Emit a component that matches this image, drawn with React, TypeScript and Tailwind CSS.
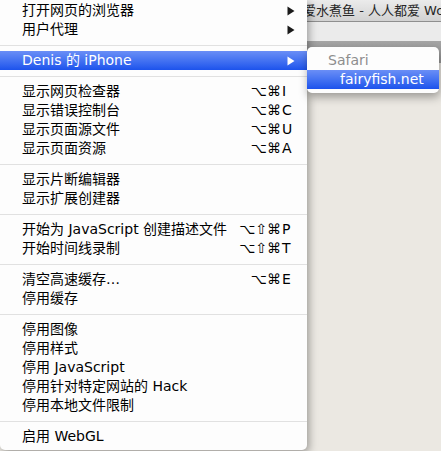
import React from 'react';

type Item =
  | { kind: 'sep' }
  | { kind: 'item'; label: string; mods?: string; keyChar?: string; submenu?: boolean; active?: boolean };

const items: Item[] = [
  { kind: 'item', label: '打开网页的浏览器', submenu: true },
  { kind: 'item', label: '用户代理', submenu: true },
  { kind: 'sep' },
  { kind: 'item', label: 'Denis 的 iPhone', submenu: true, active: true },
  { kind: 'sep' },
  { kind: 'item', label: '显示网页检查器', mods: '⌥⌘', keyChar: 'I' },
  { kind: 'item', label: '显示错误控制台', mods: '⌥⌘', keyChar: 'C' },
  { kind: 'item', label: '显示页面源文件', mods: '⌥⌘', keyChar: 'U' },
  { kind: 'item', label: '显示页面资源', mods: '⌥⌘', keyChar: 'A' },
  { kind: 'sep' },
  { kind: 'item', label: '显示片断编辑器' },
  { kind: 'item', label: '显示扩展创建器' },
  { kind: 'sep' },
  { kind: 'item', label: '开始为 JavaScript 创建描述文件', mods: '⌥⇧⌘', keyChar: 'P' },
  { kind: 'item', label: '开始时间线录制', mods: '⌥⇧⌘', keyChar: 'T' },
  { kind: 'sep' },
  { kind: 'item', label: '清空高速缓存…', mods: '⌥⌘', keyChar: 'E' },
  { kind: 'item', label: '停用缓存' },
  { kind: 'sep' },
  { kind: 'item', label: '停用图像' },
  { kind: 'item', label: '停用样式' },
  { kind: 'item', label: '停用 JavaScript' },
  { kind: 'item', label: '停用针对特定网站的 Hack' },
  { kind: 'item', label: '停用本地文件限制' },
  { kind: 'sep' },
  { kind: 'item', label: '启用 WebGL' },
];

const Arrow = ({ white }: { white?: boolean }) => (
  <svg width="8" height="10" viewBox="0 0 8 10" className="mr-px">
    <path d="M0.5 0.5 L7.5 5 L0.5 9.5 Z" fill={white ? '#ffffff' : '#1a1a1a'} />
  </svg>
);

const MenuRow = ({ item }: { item: Extract<Item, { kind: 'item' }> }) => (
  <div
    className={`flex h-[19px] items-center pl-[22px] pr-[11px] ${
      item.active ? 'bg-gradient-to-b from-[#6a8ef6] to-[#1c52ec] text-white' : 'text-black'
    }`}
  >
    <span className="flex-1 whitespace-nowrap">{item.label}</span>
    {item.keyChar && (
      <>
        <span className="whitespace-nowrap pr-px font-[family-name:'DejaVu_Sans',sans-serif] text-[14px]">{item.mods}</span>
        <span className="w-[14px] text-left">{item.keyChar}</span>
      </>
    )}
    {item.submenu && <Arrow white={item.active} />}
  </div>
);

export default function App() {
  return (
    <div className="relative h-[451px] w-[441px] overflow-hidden bg-[#ebe8e2] font-[family-name:'Lucida_Grande','DejaVu_Sans','Noto_Sans_CJK_SC',sans-serif] text-[14px]">
      {/* browser window behind the menu */}
      <div className="flex h-[21px] items-center overflow-hidden whitespace-nowrap bg-gradient-to-b from-[#ebebeb] to-[#d2d2d2] pl-[303px] text-[13px] text-[#262626]">
        爱水煮鱼 - 人人都爱 WordPress
      </div>
      <div className="h-px bg-[#8f8f8f]" />
      <div className="h-[19px] bg-[#ebebeb]" />
      <div className="h-[22px] bg-gradient-to-b from-[#a5a5a5] to-[#989898]" />

      {/* Develop menu */}
      <div className="absolute left-0 top-0 h-[450px] w-[307px] rounded-b-[5px] bg-[#fdfdfd] pt-px shadow-[2px_3px_8px_rgba(0,0,0,0.35)]">
        {items.map((item, i) =>
          item.kind === 'sep' ? (
            <div key={i} className="flex h-[12px] items-center">
              <div className="h-px w-full bg-[#e1e1e1]" />
            </div>
          ) : (
            <MenuRow key={i} item={item} />
          )
        )}
      </div>

      {/* Device submenu */}
      <div className="absolute left-[307px] top-[47px] w-[132px] rounded-[5px] bg-[#fdfdfd] py-[4px] shadow-[1px_4px_10px_rgba(0,0,0,0.35)]">
        <div className="flex h-[19px] items-center pl-[21px] text-[#8e8e8e]">Safari</div>
        <div className="flex h-[19px] items-center bg-gradient-to-b from-[#6a8ef6] to-[#1c52ec] pl-[33px] text-white">
          fairyfish.net
        </div>
      </div>
    </div>
  );
}
